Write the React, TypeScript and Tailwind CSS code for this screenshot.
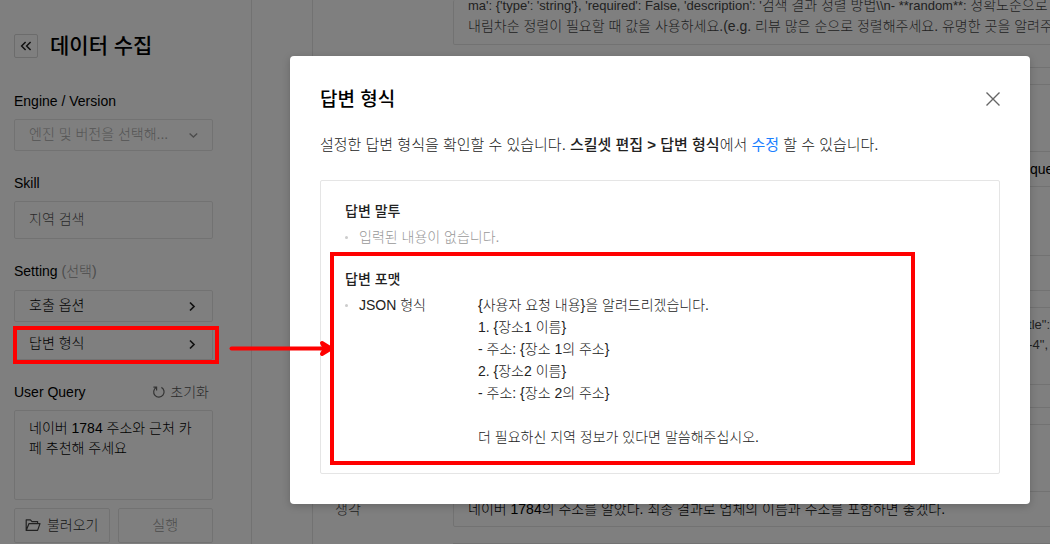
import type { ReactNode } from "react";

const field = "rounded-[2px] border border-[#e5e5e5] px-[14px]";

function Chevron({ down = false }: { down?: boolean }) {
  return (
    <svg width="12" height="12" viewBox="0 0 12 12" fill="none" stroke={down ? "#999" : "#222"} strokeWidth={down ? 1.4 : 1.7} className="shrink-0">
      <path d={down ? "M3.6 4.4 L7.4 8 L11.2 4.4" : "M4 2.5 L8 6.5 L4 10.5"} />
    </svg>
  );
}

function SettingButton({ children, className = "" }: { children: ReactNode; className?: string }) {
  return (
    <button type="button" className={`${field} flex h-8 w-full items-center justify-between text-left text-black ${className}`}>
      <span className="pb-[3px]">{children}</span>
      <Chevron />
    </button>
  );
}

function Sidebar() {
  return (
    <aside className="w-[252px] shrink-0 border-r border-[#e5e5e5] pl-[14px] pr-[38px]">
      <header className="flex items-center gap-3 pt-8">
        <button type="button" aria-label="접기" className="flex size-6 items-center justify-center rounded-[2px] border border-[#d8d8d8]">
          <svg width="12" height="10" viewBox="0 0 12 10" fill="none" stroke="#222" strokeWidth="1.5">
            <path d="M5.6 1 L1.6 5 L5.6 9 M10.6 1 L6.6 5 L10.6 9" />
          </svg>
        </button>
        <h1 className="text-[21px] leading-7 font-medium text-black">데이터 수집</h1>
      </header>

      <label htmlFor="engine" className="mt-[31px] block leading-5 text-black">Engine / Version</label>
      <div className={`${field} mt-2 flex h-8 items-center justify-between`}>
        <select id="engine" className="w-full appearance-none bg-transparent pb-[2px] leading-5 text-[#aaa] outline-none">
          <option>엔진 및 버전을 선택해...</option>
        </select>
        <Chevron down />
      </div>

      <label htmlFor="skill" className="mt-[22px] block leading-5 text-black">Skill</label>
      <input id="skill" readOnly value="지역 검색" className={`${field} mt-2 h-[38px] w-full pb-1 text-[#555] outline-none`} />

      <h2 className="mt-[22px] leading-5 text-black">
        Setting <span className="text-[#999]">(선택)</span>
      </h2>
      <SettingButton className="mt-[9px]">호출 옵션</SettingButton>
      <SettingButton className="mt-[6px]">답변 형식</SettingButton>

      <div className="mt-[22px] flex items-center justify-between leading-5">
        <label htmlFor="query" className="text-black">User Query</label>
        <button type="button" className="flex items-center gap-1 pr-1 text-[#555]">
          <svg width="14" height="14" viewBox="0 0 14 14" fill="none" stroke="#666" strokeWidth="1.2">
            <path d="M9.4 2.4 A5.2 5.2 0 1 1 4.2 2.5 M1.4 2.2 H4.6 V5.4" />
          </svg>
          초기화
        </button>
      </div>
      <textarea
        id="query"
        readOnly
        value="네이버 1784 주소와 근처 카페 추천해 주세요"
        className={`${field} mt-2 block h-[90px] w-full resize-none pt-[7px] leading-5 break-all text-black outline-none`}
      />

      <div className="mt-2 flex gap-2">
        <button type="button" className="flex h-[35px] flex-1 items-center justify-center gap-[6px] rounded-[2px] border border-[#e5e5e5] pb-px text-[#333]">
          <svg width="16" height="14" viewBox="0 0 16 14" fill="none" stroke="#444" strokeWidth="1.2" strokeLinejoin="round">
            <path d="M1.2 12.4 V1.8 H5.4 L7 3.6 H12.6 V5.6 M1.2 12.4 L4 5.6 H15 L12.6 12.4 Z" />
          </svg>
          불러오기
        </button>
        <button type="button" className="h-[35px] flex-1 rounded-[2px] border border-[#e5e5e5] pb-px text-[#999]">실행</button>
      </div>
    </aside>
  );
}

function Results() {
  return (
    <main className="min-w-0 flex-1 overflow-hidden pl-[60px]">
      <div className="h-full w-[1000px] border-l border-[#e5e5e5] pl-[140px] leading-5 whitespace-nowrap text-[#444]">
        <div className="h-[45px] overflow-hidden rounded-[2px] border border-t-0 border-[#e5e5e5] pl-[14px]">
          <p className="-mt-[5px]">
            <span className="text-[13px]">ma': {"{'type': 'string'}"}, 'required': False, 'description': '</span>
            검색 결과 정렬 방법
            <span className="text-[13px]">\\n- **random**: </span>
            정확도순으로 정렬
          </p>
          <p>내림차순 정렬이 필요할 때 값을 사용하세요.(e.g. 리뷰 많은 순으로 정렬해주세요. 유명한 곳을 알려주세요.)</p>
        </div>
        <div className="mt-[22px] h-[18px] border-y border-[#e5e5e5]" />
        <div className="h-[67px] border-b border-[#e5e5e5]" />
        <div className="flex h-[35px] items-center border-b border-[#e5e5e5] pl-[577px] text-black">query</div>
        <div className="h-[69px] border-b border-[#e5e5e5]" />
        <div className="h-[35px] border-b border-[#e5e5e5]" />
        <div className="h-[17px] border-b border-[#e5e5e5]" />
        <div className="h-[77px] border-b border-[#e5e5e5] pt-[7px] pl-[564px] text-[13px]">
          <p>"title":</p>
          <p className="pl-1">6-4",</p>
        </div>
        <div className="h-[23px] border-b border-[#e5e5e5]" />
        <div className="h-[17px] border-b border-[#e5e5e5]" />
        <div className="h-[66px]" />
        <div className="flex h-[36px] items-center rounded-[2px] border border-[#e5e5e5] pl-[14px] text-black">
          <span className="-ml-[133px] w-[133px] text-[#444]">생각</span>
          네이버 1784의 주소를 알았다. 최종 결과로 업체의 이름과 주소를 포함하면 좋겠다.
        </div>
        <div className="mt-4 h-4 border-t border-[#e5e5e5]" />
      </div>
    </main>
  );
}

function Section({ title, children }: { title: string; children: ReactNode }) {
  return (
    <section>
      <h3 className="leading-[22px] font-medium text-[#222]">{title}</h3>
      <div className="mt-1 flex leading-[22px]">
        <span className="mt-[10px] mr-[11px] size-[3px] shrink-0 rounded-full bg-[#ccc]" />
        {children}
      </div>
    </section>
  );
}

function Dialog() {
  return (
    <div role="dialog" aria-modal="true" aria-labelledby="dialog-title" className="rounded-[4px] bg-white px-[30px] pt-[30px] pb-[30px] text-[#222] shadow-[0_2px_8px_rgba(0,0,0,0.2)]">
      <header className="flex items-center justify-between">
        <h2 id="dialog-title" className="text-[19px] leading-7 font-medium text-black">답변 형식</h2>
        <button type="button" aria-label="닫기" className="pb-[2px]">
          <svg width="14" height="14" viewBox="0 0 14 14" stroke="#666" strokeWidth="1.4">
            <path d="M0.5 0.5 L13.5 13.5 M13.5 0.5 L0.5 13.5" />
          </svg>
        </button>
      </header>
      <p className="mt-5 text-[15px] leading-[22px]">
        설정한 답변 형식을 확인할 수 있습니다.{" "}
        <strong className="font-medium">
          스킬셋 편집 <b className="font-bold">&gt;</b> 답변 형식
        </strong>
        에서 <a href="#edit" className="font-normal text-[#1a80ff]">수정</a> 할 수 있습니다.
      </p>
      <div className="mt-6 flex flex-col gap-5 rounded-[2px] border border-[#e5e5e5] px-6 pt-[19px] pb-[25px]">
        <Section title="답변 말투">
          <p className="text-[#999]">입력된 내용이 없습니다.</p>
        </Section>
        <Section title="답변 포맷">
          <p className="w-[119px] shrink-0">JSON 형식</p>
          <p className="whitespace-pre-line">
            {"{사용자 요청 내용}을 알려드리겠습니다.\n1. {장소1 이름}\n- 주소: {장소 1의 주소}\n2. {장소2 이름}\n- 주소: {장소 2의 주소}\n\n더 필요하신 지역 정보가 있다면 말씀해주십시오."}
          </p>
        </Section>
      </div>
    </div>
  );
}

export default function App() {
  return (
    <div className="relative h-screen overflow-hidden bg-white font-['Liberation_Sans','Noto_Sans_CJK_KR',sans-serif] text-sm font-light">
      <div className="flex h-full overflow-hidden">
        <Sidebar />
        <Results />
      </div>
      <div className="absolute inset-0 bg-black/50 pt-14 pr-5 pl-[290px]">
        <Dialog />
      </div>
      <div className="pointer-events-none absolute top-[326px] left-[13px] h-[38px] w-[206px] border-4 border-[#f00]" />
      <div className="pointer-events-none absolute top-[252px] left-[330px] h-[213px] w-[585px] border-4 border-[#f00]" />
      <svg width="106" height="18" viewBox="0 0 106 18" className="pointer-events-none absolute top-[340px] left-[229px]" fill="none" stroke="#f00" strokeLinecap="round" strokeLinejoin="round">
        <path d="M2.5 8.5 H100" strokeWidth="4" />
        <path d="M93 3 L102 8.5 L93 14 L96 8.5 Z" fill="#f00" strokeWidth="4" />
      </svg>
    </div>
  );
}
